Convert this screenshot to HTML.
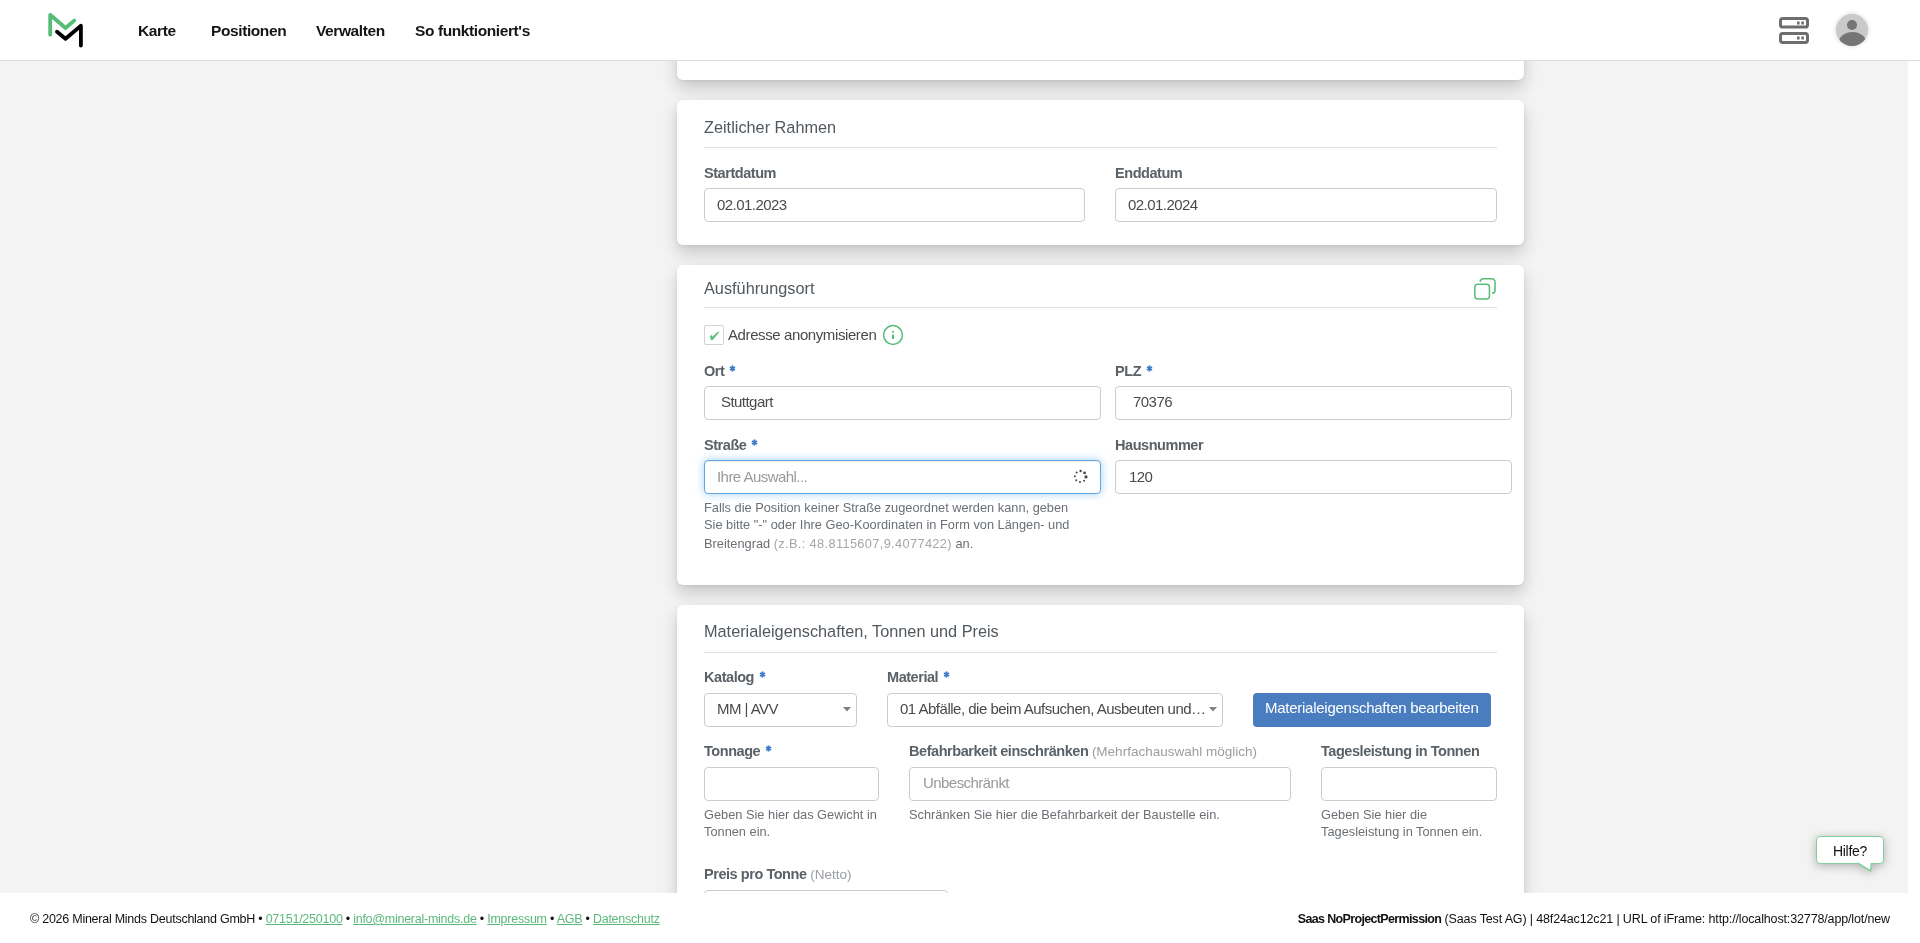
<!DOCTYPE html>
<html><head><meta charset="utf-8"><style>
html,body{margin:0;padding:0;width:1920px;height:943px;overflow:hidden;background:#fff;}
body{position:relative;font-family:"Liberation Sans", sans-serif;}
.t{position:absolute;white-space:nowrap;line-height:1;will-change:transform;}
.r{position:absolute;}
.bm{display:inline-block;width:0;height:0;vertical-align:baseline;}
</style></head><body>
<div class="r" style="left:0px;top:61px;width:1908px;height:832px;background:#f3f3f3;"></div>
<div class="r" style="left:677px;top:-100px;width:847px;height:180px;background:#fff;border-radius:6px;box-shadow:0 1px 3px rgba(0,0,0,.06),0 8px 16px rgba(0,0,0,.18);"></div>
<div class="r" style="left:677px;top:100px;width:847px;height:145px;background:#fff;border-radius:6px;box-shadow:0 1px 3px rgba(0,0,0,.06),0 8px 16px rgba(0,0,0,.18);"></div>
<div class="r" style="left:677px;top:265px;width:847px;height:320px;background:#fff;border-radius:6px;box-shadow:0 1px 3px rgba(0,0,0,.06),0 8px 16px rgba(0,0,0,.18);"></div>
<div class="r" style="left:677px;top:605px;width:847px;height:400px;background:#fff;border-radius:6px;box-shadow:0 1px 3px rgba(0,0,0,.06),0 8px 16px rgba(0,0,0,.18);"></div>
<div class="t" id="t0" style="left:704px;top:119.01px;font-size:16.3px;color:#51585e;font-weight:normal;">Zeitlicher Rahmen<i class="bm"></i></div>
<div class="r" style="left:704px;top:147px;width:793px;height:1px;background:#dedede;"></div>
<div class="t" id="t1" style="left:704px;top:166.01px;font-size:14.5px;color:#5a6167;font-weight:bold;letter-spacing:-0.45px;">Startdatum<i class="bm"></i></div>
<div class="r" style="left:704px;top:188px;width:381px;height:34px;box-sizing:border-box;border:1px solid #ccc;border-radius:4px;background:#fff;"></div>
<div class="t" id="t2" style="left:717px;top:197.01px;font-size:15px;color:#4a4a4a;font-weight:normal;letter-spacing:-0.55px;">02.01.2023<i class="bm"></i></div>
<div class="t" id="t3" style="left:1115px;top:166.01px;font-size:14.5px;color:#5a6167;font-weight:bold;letter-spacing:-0.45px;">Enddatum<i class="bm"></i></div>
<div class="r" style="left:1115px;top:188px;width:382px;height:34px;box-sizing:border-box;border:1px solid #ccc;border-radius:4px;background:#fff;"></div>
<div class="t" id="t4" style="left:1128px;top:197.01px;font-size:15px;color:#4a4a4a;font-weight:normal;letter-spacing:-0.55px;">02.01.2024<i class="bm"></i></div>
<div class="t" id="t5" style="left:704px;top:280.01px;font-size:16.3px;color:#51585e;font-weight:normal;">Ausführungsort<i class="bm"></i></div>
<div class="r" style="left:704px;top:307px;width:793px;height:1px;background:#dedede;"></div>
<svg class="r" style="left:1473px;top:277px" width="24" height="24" viewBox="0 0 24 24" fill="none" stroke="#55bd75" stroke-width="1.5"><rect x="1.85" y="7.15" width="14.6" height="14.8" rx="3"/><path d="M7.15 4.9A3.1 3.1 0 0 1 10.25 1.75H18.95A3.1 3.1 0 0 1 22.05 4.85V13.15A3.1 3.1 0 0 1 18.95 16.25"/></svg>
<div class="r" style="left:704px;top:325px;width:20px;height:20px;box-sizing:border-box;border:1px solid #d3d3d3;border-radius:2px;background:#fff;"></div>
<svg class="r" style="left:700px;top:320px" width="30" height="30" viewBox="0 0 30 30"><path d="M10 16.2L11.6 15.2L12.3 17.1L18.1 11.8L19 12.3L12.5 19.9L11.2 19.9Z" fill="#55bf75" stroke="#55bf75" stroke-width="0.4" stroke-linejoin="round"/></svg>
<div class="t" id="t6" style="left:728px;top:327.01px;font-size:15px;color:#4a4a4a;font-weight:normal;letter-spacing:-0.4px;">Adresse anonymisieren<i class="bm"></i></div>
<svg class="r" style="left:882px;top:324px" width="22" height="22" viewBox="0 0 22 22"><circle cx="11" cy="11" r="9.4" fill="none" stroke="#55bd75" stroke-width="1.5"/><rect x="10" y="10.6" width="2" height="4.4" fill="#55bd75"/><rect x="10" y="7" width="2" height="1.6" fill="#55bd75"/></svg>
<div class="t" id="t7" style="left:704px;top:364.01px;font-size:14.5px;color:#5a6167;font-weight:bold;letter-spacing:-0.45px;">Ort<svg style="display:inline-block;vertical-align:baseline;position:relative;top:-4px;margin-left:5px" width="7" height="7" viewBox="0 0 7 7"><path d="M3.5 0.6V6.4M1 2.05L6 4.95M1 4.95L6 2.05" stroke="#3d7ccc" stroke-width="1.9"/><circle cx="3.5" cy="3.5" r="1.6" fill="#3d7ccc"/></svg><i class="bm"></i></div>
<div class="r" style="left:704px;top:386px;width:397px;height:34px;box-sizing:border-box;border:1px solid #ccc;border-radius:4px;background:#fff;"></div>
<div class="t" id="t8" style="left:721px;top:394.01px;font-size:15px;color:#4a4a4a;font-weight:normal;letter-spacing:-0.55px;">Stuttgart<i class="bm"></i></div>
<div class="t" id="t9" style="left:1115px;top:364.01px;font-size:14.5px;color:#5a6167;font-weight:bold;letter-spacing:-0.45px;">PLZ<svg style="display:inline-block;vertical-align:baseline;position:relative;top:-4px;margin-left:5px" width="7" height="7" viewBox="0 0 7 7"><path d="M3.5 0.6V6.4M1 2.05L6 4.95M1 4.95L6 2.05" stroke="#3d7ccc" stroke-width="1.9"/><circle cx="3.5" cy="3.5" r="1.6" fill="#3d7ccc"/></svg><i class="bm"></i></div>
<div class="r" style="left:1115px;top:386px;width:397px;height:34px;box-sizing:border-box;border:1px solid #ccc;border-radius:4px;background:#fff;"></div>
<div class="t" id="t10" style="left:1133px;top:394.01px;font-size:15px;color:#4a4a4a;font-weight:normal;letter-spacing:-0.55px;">70376<i class="bm"></i></div>
<div class="t" id="t11" style="left:704px;top:438.01px;font-size:14.5px;color:#5a6167;font-weight:bold;letter-spacing:-0.45px;">Straße<svg style="display:inline-block;vertical-align:baseline;position:relative;top:-4px;margin-left:5px" width="7" height="7" viewBox="0 0 7 7"><path d="M3.5 0.6V6.4M1 2.05L6 4.95M1 4.95L6 2.05" stroke="#3d7ccc" stroke-width="1.9"/><circle cx="3.5" cy="3.5" r="1.6" fill="#3d7ccc"/></svg><i class="bm"></i></div>
<div class="r" style="left:704px;top:460px;width:397px;height:34px;box-sizing:border-box;border:1px solid #62a8e6;border-radius:4px;background:#fff;box-shadow:inset 0 1px 1px rgba(0,0,0,.075),0 0 8px rgba(102,175,233,.6);"></div>
<div class="t" id="t12" style="left:717px;top:469.01px;font-size:15px;color:#999;font-weight:normal;letter-spacing:-0.55px;">Ihre Auswahl...<i class="bm"></i></div>
<svg class="r" style="left:1070px;top:465px" width="22" height="22" viewBox="0 0 22 22"><circle cx="16.00" cy="11.90" r="1.6" fill="#474747"/><circle cx="14.60" cy="7.90" r="1.4" fill="#474747"/><circle cx="10.60" cy="6.00" r="1.2" fill="#474747"/><circle cx="6.70" cy="7.40" r="1.0" fill="#474747"/><circle cx="4.90" cy="11.20" r="1.0" fill="#474747"/><circle cx="6.20" cy="15.20" r="1.0" fill="#474747"/><circle cx="10.00" cy="17.00" r="1.05" fill="#474747"/><circle cx="14.10" cy="15.80" r="1.0" fill="#474747"/></svg>
<div class="t" id="t13" style="left:1115px;top:438.01px;font-size:14.5px;color:#5a6167;font-weight:bold;letter-spacing:-0.45px;">Hausnummer<i class="bm"></i></div>
<div class="r" style="left:1115px;top:460px;width:397px;height:34px;box-sizing:border-box;border:1px solid #ccc;border-radius:4px;background:#fff;"></div>
<div class="t" id="t14" style="left:1129px;top:469.01px;font-size:15px;color:#4a4a4a;font-weight:normal;letter-spacing:-0.55px;">120<i class="bm"></i></div>
<div class="t" id="t15" style="left:704px;top:502.01px;font-size:12.8px;color:#6b7075;font-weight:normal;">Falls die Position keiner Straße zugeordnet werden kann, geben<i class="bm"></i></div>
<div class="t" id="t16" style="left:704px;top:519.01px;font-size:12.8px;color:#6b7075;font-weight:normal;">Sie bitte "-" oder Ihre Geo-Koordinaten in Form von Längen- und<i class="bm"></i></div>
<div class="t" id="t17" style="left:704px;top:538.01px;font-size:12.8px;color:#6b7075;font-weight:normal;">Breitengrad <span style="color:#a6a6a6;letter-spacing:0.35px">(z.B.: 48.8115607,9.4077422)</span> an.<i class="bm"></i></div>
<div class="t" id="t18" style="left:704px;top:623.01px;font-size:16.3px;color:#51585e;font-weight:normal;">Materialeigenschaften, Tonnen und Preis<i class="bm"></i></div>
<div class="r" style="left:704px;top:652px;width:793px;height:1px;background:#dedede;"></div>
<div class="t" id="t19" style="left:704px;top:670.01px;font-size:14.5px;color:#5a6167;font-weight:bold;letter-spacing:-0.45px;">Katalog<svg style="display:inline-block;vertical-align:baseline;position:relative;top:-4px;margin-left:5px" width="7" height="7" viewBox="0 0 7 7"><path d="M3.5 0.6V6.4M1 2.05L6 4.95M1 4.95L6 2.05" stroke="#3d7ccc" stroke-width="1.9"/><circle cx="3.5" cy="3.5" r="1.6" fill="#3d7ccc"/></svg><i class="bm"></i></div>
<div class="r" style="left:704px;top:693px;width:153px;height:34px;box-sizing:border-box;border:1px solid #ccc;border-radius:4px;background:#fff;"></div>
<div class="t" id="t20" style="left:717px;top:701.01px;font-size:15px;color:#4a4a4a;font-weight:normal;letter-spacing:-0.55px;">MM | AVV<i class="bm"></i></div>
<svg class="r" style="left:842px;top:706px" width="10" height="7" viewBox="0 0 10 7"><path d="M1 1H9L5 5.6Z" fill="#808080"/></svg>
<div class="t" id="t21" style="left:887px;top:670.01px;font-size:14.5px;color:#5a6167;font-weight:bold;letter-spacing:-0.45px;">Material<svg style="display:inline-block;vertical-align:baseline;position:relative;top:-4px;margin-left:5px" width="7" height="7" viewBox="0 0 7 7"><path d="M3.5 0.6V6.4M1 2.05L6 4.95M1 4.95L6 2.05" stroke="#3d7ccc" stroke-width="1.9"/><circle cx="3.5" cy="3.5" r="1.6" fill="#3d7ccc"/></svg><i class="bm"></i></div>
<div class="r" style="left:887px;top:693px;width:336px;height:34px;box-sizing:border-box;border:1px solid #ccc;border-radius:4px;background:#fff;"></div>
<div class="t" id="t22" style="left:900px;top:701.01px;font-size:15px;color:#4a4a4a;font-weight:normal;letter-spacing:-0.5px;">01 Abfälle, die beim Aufsuchen, Ausbeuten und…<i class="bm"></i></div>
<svg class="r" style="left:1208px;top:706px" width="10" height="7" viewBox="0 0 10 7"><path d="M1 1H9L5 5.6Z" fill="#808080"/></svg>
<div class="r" style="left:1253px;top:693px;width:238px;height:34px;background:#4a7dbf;border-radius:4px;"></div>
<div class="t" id="t23" style="left:1265px;top:700.01px;font-size:15px;color:#fff;font-weight:normal;letter-spacing:-0.26px;">Materialeigenschaften bearbeiten<i class="bm"></i></div>
<div class="t" id="t24" style="left:704px;top:744.01px;font-size:14.5px;color:#5a6167;font-weight:bold;letter-spacing:-0.45px;">Tonnage<svg style="display:inline-block;vertical-align:baseline;position:relative;top:-4px;margin-left:5px" width="7" height="7" viewBox="0 0 7 7"><path d="M3.5 0.6V6.4M1 2.05L6 4.95M1 4.95L6 2.05" stroke="#3d7ccc" stroke-width="1.9"/><circle cx="3.5" cy="3.5" r="1.6" fill="#3d7ccc"/></svg><i class="bm"></i></div>
<div class="r" style="left:704px;top:767px;width:175px;height:34px;box-sizing:border-box;border:1px solid #ccc;border-radius:4px;background:#fff;"></div>
<div class="t" id="t25" style="left:704px;top:809.01px;font-size:12.8px;color:#6b7075;font-weight:normal;">Geben Sie hier das Gewicht in<i class="bm"></i></div>
<div class="t" id="t26" style="left:704px;top:826.01px;font-size:12.8px;color:#6b7075;font-weight:normal;">Tonnen ein.<i class="bm"></i></div>
<div class="t" id="t27" style="left:909px;top:744.01px;font-size:14.5px;color:#5a6167;font-weight:bold;letter-spacing:-0.45px;">Befahrbarkeit einschränken <span style="color:#9a9ea2;font-size:13.5px;font-weight:normal;letter-spacing:0">(Mehrfachauswahl möglich)</span><i class="bm"></i></div>
<div class="r" style="left:909px;top:767px;width:382px;height:34px;box-sizing:border-box;border:1px solid #ccc;border-radius:4px;background:#fff;"></div>
<div class="t" id="t28" style="left:923px;top:775.01px;font-size:15px;color:#999;font-weight:normal;letter-spacing:-0.55px;">Unbeschränkt<i class="bm"></i></div>
<div class="t" id="t29" style="left:909px;top:809.01px;font-size:12.8px;color:#6b7075;font-weight:normal;">Schränken Sie hier die Befahrbarkeit der Baustelle ein.<i class="bm"></i></div>
<div class="t" id="t30" style="left:1321px;top:744.01px;font-size:14.5px;color:#5a6167;font-weight:bold;letter-spacing:-0.45px;">Tagesleistung in Tonnen<i class="bm"></i></div>
<div class="r" style="left:1321px;top:767px;width:176px;height:34px;box-sizing:border-box;border:1px solid #ccc;border-radius:4px;background:#fff;"></div>
<div class="t" id="t31" style="left:1321px;top:809.01px;font-size:12.8px;color:#6b7075;font-weight:normal;">Geben Sie hier die<i class="bm"></i></div>
<div class="t" id="t32" style="left:1321px;top:826.01px;font-size:12.8px;color:#6b7075;font-weight:normal;">Tagesleistung in Tonnen ein.<i class="bm"></i></div>
<div class="t" id="t33" style="left:704px;top:867.01px;font-size:14.5px;color:#5a6167;font-weight:bold;letter-spacing:-0.45px;">Preis pro Tonne <span style="color:#9a9ea2;font-size:13.5px;font-weight:normal;letter-spacing:0">(Netto)</span><i class="bm"></i></div>
<div class="r" style="left:704px;top:890px;width:244px;height:34px;box-sizing:border-box;border:1px solid #ccc;border-radius:4px;background:#fff;"></div>
<div class="r" style="left:0px;top:0px;width:1920px;height:60px;background:#fff;border-bottom:1px solid #dcdcdc;"></div>
<svg class="r" style="left:40px;top:8px" width="50" height="45" viewBox="40 8 50 45"><path d="M50.2 34.7V14.8L65.5 28L74.2 20.6" fill="none" stroke="#55bd75" stroke-width="3.8" stroke-linecap="round" stroke-linejoin="round"/><path d="M57 31.8L65.5 38.8L80.9 25.7V45.6" fill="none" stroke="#000" stroke-width="3.8" stroke-linecap="round" stroke-linejoin="round"/></svg>
<div class="t" id="t34" style="left:138px;top:23.00px;font-size:15.5px;color:#151515;font-weight:bold;letter-spacing:-0.4px;">Karte<i class="bm"></i></div>
<div class="t" id="t35" style="left:211px;top:23.00px;font-size:15.5px;color:#151515;font-weight:bold;letter-spacing:-0.4px;">Positionen<i class="bm"></i></div>
<div class="t" id="t36" style="left:315.5px;top:23.00px;font-size:15.5px;color:#151515;font-weight:bold;letter-spacing:-0.4px;">Verwalten<i class="bm"></i></div>
<div class="t" id="t37" style="left:415px;top:23.00px;font-size:15.5px;color:#151515;font-weight:bold;letter-spacing:-0.4px;">So funktioniert's<i class="bm"></i></div>
<svg class="r" style="left:1778px;top:16px" width="32" height="29" viewBox="0 0 32 29"><rect x="2.5" y="2.5" width="27" height="8.6" rx="2.2" fill="none" stroke="#6e6e6e" stroke-width="3"/><rect x="2.5" y="17.6" width="27" height="8.8" rx="2.2" fill="none" stroke="#6e6e6e" stroke-width="3"/><rect x="19" y="5.5" width="2.6" height="3" fill="#6e6e6e"/><rect x="23.3" y="5.5" width="2.6" height="3" fill="#6e6e6e"/><rect x="19" y="20.5" width="2.6" height="3" fill="#6e6e6e"/><rect x="23.3" y="20.5" width="2.6" height="3" fill="#6e6e6e"/></svg>
<div class="r" style="left:1836px;top:14px;width:32px;height:32px;border-radius:50%;background:#c9c9c9;overflow:hidden;box-shadow:0 0 4px rgba(0,0,0,.18)"><div style="position:absolute;left:11px;top:6px;width:10px;height:10px;border-radius:50%;background:#757575"></div><div style="position:absolute;left:2.5px;top:18px;width:27px;height:20px;border-radius:50%;background:#757575"></div></div>
<div class="r" style="left:0px;top:893px;width:1920px;height:50px;background:#fff;"></div>
<div class="t" id="t38" style="left:30px;top:913.01px;font-size:12.5px;color:#111;font-weight:normal;letter-spacing:-0.25px;">© 2026 Mineral Minds Deutschland GmbH • <span style="color:#5cb87a;text-decoration:underline;">07151/250100</span> • <span style="color:#5cb87a;text-decoration:underline;">info@mineral-minds.de</span> • <span style="color:#5cb87a;text-decoration:underline;">Impressum</span> • <span style="color:#5cb87a;text-decoration:underline;">AGB</span> • <span style="color:#5cb87a;text-decoration:underline;">Datenschutz</span><i class="bm"></i></div>
<div class="t" id="t39" style="left:1890px;top:913.01px;font-size:12.5px;color:#111;font-weight:normal;letter-spacing:-0.14px;transform:translateX(-100%);"><b style="letter-spacing:-0.65px">Saas NoProjectPermission</b> (Saas Test AG) | 48f24ac12c21 | URL of iFrame: http://localhost:32778/app/lot/new<i class="bm"></i></div>
<div class="r" style="left:0;top:0;width:1920px;height:943px;filter:drop-shadow(0 2px 5px rgba(0,0,0,.28));pointer-events:none"><div class="r" style="left:1816px;top:836px;width:68px;height:28px;box-sizing:border-box;border:1.5px solid #80cf9a;border-radius:4px;background:#fff;"></div><svg class="r" style="left:1850px;top:858px" width="30" height="18" viewBox="0 0 30 18"><rect x="8.6" y="3.6" width="12.4" height="2.6" fill="#fff"/><path d="M7.8 5.1L20.7 13L21.4 5.1Z" fill="#fff"/><path d="M7.8 5.1L20.7 13L21.4 5.1" fill="none" stroke="#80cf9a" stroke-width="1.5" stroke-linejoin="round"/></svg></div>
<div class="t" id="t40" style="left:1833px;top:844.01px;font-size:14px;color:#111;font-weight:normal;letter-spacing:-0.3px;">Hilfe?<i class="bm"></i></div>
</body></html>
